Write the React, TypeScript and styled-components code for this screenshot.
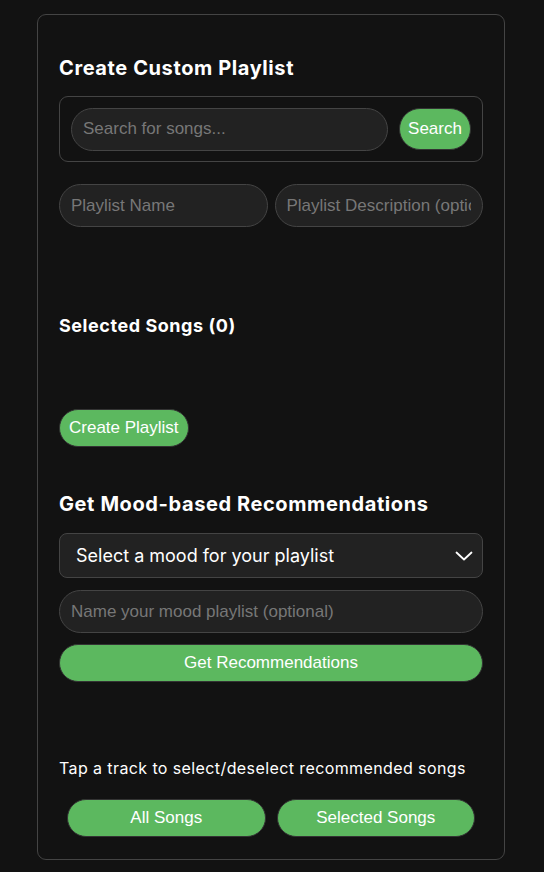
import { ReactElement } from 'react';
import styled, { createGlobalStyle } from 'styled-components';

const GlobalStyle = createGlobalStyle`
  html, body {
    margin: 0;
    padding: 0;
    background: #121212;
  }
  body {
    font-family: "Liberation Sans", Arial, sans-serif;
    color: #fff;
  }
`;

const green = '#5cb85f';

function ChevronDown(): ReactElement {
  return (
    <Chevron viewBox="0 0 18 10" width="18" height="10">
      <path d="M1.5 1.5 L9 8.5 L16.5 1.5" fill="none" stroke="#fff" strokeWidth="1.8" strokeLinecap="round" strokeLinejoin="round" />
    </Chevron>
  );
}

function App(): ReactElement {
  return (
    <>
      <GlobalStyle />
      <Card>
        <Heading $top={41}>Create Custom Playlist</Heading>
        <SearchBox>
          <PillInput placeholder="Search for songs..." />
          <SearchButton>Search</SearchButton>
        </SearchBox>
        <InputRow>
          <PillInput placeholder="Playlist Name" />
          <PillInput placeholder="Playlist Description (optional)" />
        </InputRow>
        <SubHeading>Selected Songs (0)</SubHeading>
        <CreateButton>Create Playlist</CreateButton>
        <Heading $top={45}>Get Mood-based Recommendations</Heading>
        <SelectBox>
          <span>Select a mood for your playlist</span>
          <ChevronDown />
        </SelectBox>
        <MoodInput placeholder="Name your mood playlist (optional)" />
        <WideButton>Get Recommendations</WideButton>
        <Hint>Tap a track to select/deselect recommended songs</Hint>
        <ToggleRow>
          <ToggleButton>All Songs</ToggleButton>
          <ToggleButton>Selected Songs</ToggleButton>
        </ToggleRow>
      </Card>
    </>
  );
}

export default App;

const Card = styled.div`
  box-sizing: border-box;
  width: 468px;
  margin: 14px 0 0 37px;
  padding: 0 21px 22px;
  border: 1px solid #444;
  border-radius: 9px;
  background: #121212;
  display: flex;
  flex-direction: column;
`;

const Heading = styled.h2<{ $top: number }>`
  margin: ${(p) => p.$top}px 0 0;
  font-family: Inter, "Liberation Sans", sans-serif;
  font-size: 20px;
  line-height: 24px;
  font-weight: 700;
  letter-spacing: 0.6px;
  color: #fff;
`;

const SubHeading = styled.h3`
  margin: 88px 0 0;
  font-family: Inter, "Liberation Sans", sans-serif;
  font-size: 18px;
  line-height: 22px;
  font-weight: 700;
  letter-spacing: 0.55px;
  color: #fff;
`;

const SearchBox = styled.div`
  box-sizing: border-box;
  margin-top: 16px;
  height: 66px;
  padding: 11px;
  border: 1px solid #444;
  border-radius: 9px;
  display: flex;
  align-items: center;
  gap: 11px;
`;

const PillInput = styled.input`
  box-sizing: border-box;
  flex: 1;
  min-width: 0;
  height: 43px;
  padding: 0 11px;
  border: 1px solid #444;
  border-radius: 22px;
  background: #222;
  color: #fff;
  font-family: "Liberation Sans", Arial, sans-serif;
  font-size: 17px;
  outline: none;
  &::placeholder {
    color: #777;
  }
`;

const InputRow = styled.div`
  margin-top: 22px;
  display: flex;
  gap: 7px;
`;

const GreenButton = styled.button`
  box-sizing: border-box;
  border: 1px solid #333;
  background: ${green};
  color: #fff;
  font-family: "Liberation Sans", Arial, sans-serif;
  font-size: 17px;
  cursor: pointer;
  padding: 0;
`;

const SearchButton = styled(GreenButton)`
  width: 72px;
  height: 42px;
  border-radius: 21px;
  font-size: 17px;
`;

const CreateButton = styled(GreenButton)`
  align-self: flex-start;
  margin-top: 72px;
  height: 38px;
  padding: 0 9px;
  border-radius: 19px;
`;

const SelectBox = styled.div`
  box-sizing: border-box;
  margin-top: 17px;
  height: 45px;
  padding: 0 9px 0 16px;
  border: 1px solid #444;
  border-radius: 8px;
  background: #222;
  display: flex;
  align-items: center;
  justify-content: space-between;
  font-family: Inter, "Liberation Sans", sans-serif;
  font-size: 18px;
  color: #fff;
`;

const Chevron = styled.svg`
  display: block;
`;

const MoodInput = styled(PillInput)`
  flex: none;
  margin-top: 12px;
`;

const WideButton = styled(GreenButton)`
  margin-top: 11px;
  height: 38px;
  border-radius: 19px;
`;

const Hint = styled.p`
  margin: 77px 0 0;
  font-family: Inter, "Liberation Sans", sans-serif;
  font-size: 16px;
  line-height: 18px;
  letter-spacing: 0.4px;
  color: #fff;
`;

const ToggleRow = styled.div`
  margin-top: 22px;
  padding: 0 8px;
  display: flex;
  gap: 11px;
`;

const ToggleButton = styled(GreenButton)`
  flex: 1;
  height: 38px;
  border-radius: 19px;
`;
